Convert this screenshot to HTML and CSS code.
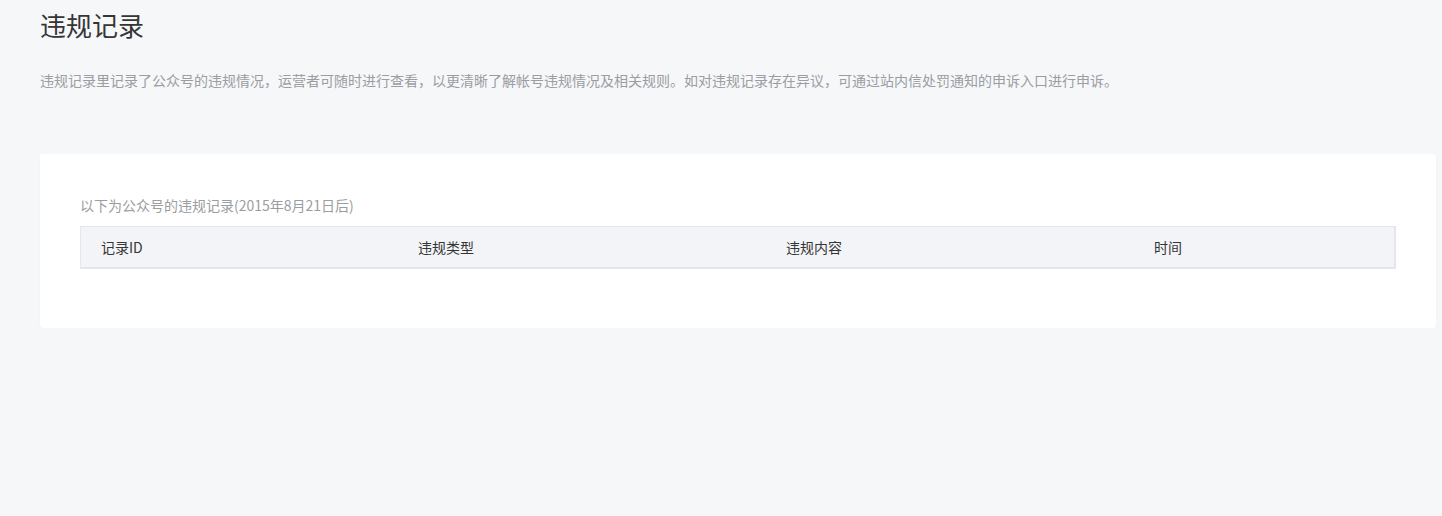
FILE: index.html
```html
<!DOCTYPE html>
<html lang="zh-CN">
<head>
<meta charset="utf-8">
<title>违规记录</title>
<link rel="stylesheet" href="styles.css">
</head>
<body>
<div class="page">
  <h1 class="title">违规记录</h1>
  <p class="desc">违规记录里记录了公众号的违规情况，运营者可随时进行查看，以更清晰了解帐号违规情况及相关规则。如对违规记录存在异议，可通过站内信处罚通知的申诉入口进行申诉。</p>
  <div class="card">
    <div class="caption">以下为公众号的违规记录(2015年8月21日后)</div>
    <table class="records">
      <thead>
        <tr>
          <th class="c-id">记录ID</th>
          <th class="c-type">违规类型</th>
          <th class="c-content">违规内容</th>
          <th class="c-time">时间</th>
        </tr>
      </thead>
      <tbody></tbody>
    </table>
  </div>
</div>
</body>
</html>
```

FILE: styles.css
```css
html, body {
  margin: 0;
  padding: 0;
  background: #f6f7f9;
}
body {
  font-family: "Noto Sans CJK SC", "Noto Sans", "Liberation Sans", sans-serif;
  color: #353535;
}
.page {
  padding: 0 6px 0 40px;
}
.title {
  margin: 0;
  font-size: 26px;
  font-weight: 400;
  line-height: 50px;
  color: #353535;
}
.desc {
  margin: 19px 0 0;
  font-size: 14px;
  line-height: 22px;
  color: #9a9da2;
}
.card {
  margin-top: 63px;
  background: #fff;
  border-radius: 3px;
  padding: 40px 40px 59px;
  box-shadow: 0 1px 2px rgba(0,0,0,0.03);
}
.caption {
  font-size: 14px;
  line-height: 22px;
  color: #9a9da2;
  margin-bottom: 10px;
}
.records {
  width: 100%;
  box-sizing: border-box;
  border-collapse: separate;
  border-spacing: 0;
  table-layout: fixed;
  border-top: 1px solid #e4e6eb;
  border-left: 1px solid #e4e6eb;
  border-right: 2px solid #e4e6eb;
  border-bottom: 2px solid #e4e6eb;
  background: #f3f4f7;
}
.records th {
  box-sizing: border-box;
  height: 40px;
  padding: 0 0 0 20px;
  text-align: left;
  font-weight: 400;
  font-size: 14px;
  color: #353535;
}
.c-id { width: 317px; }
.c-type { width: 368px; }
.c-content { width: 368px; }
.c-time { width: 260px; }
```
